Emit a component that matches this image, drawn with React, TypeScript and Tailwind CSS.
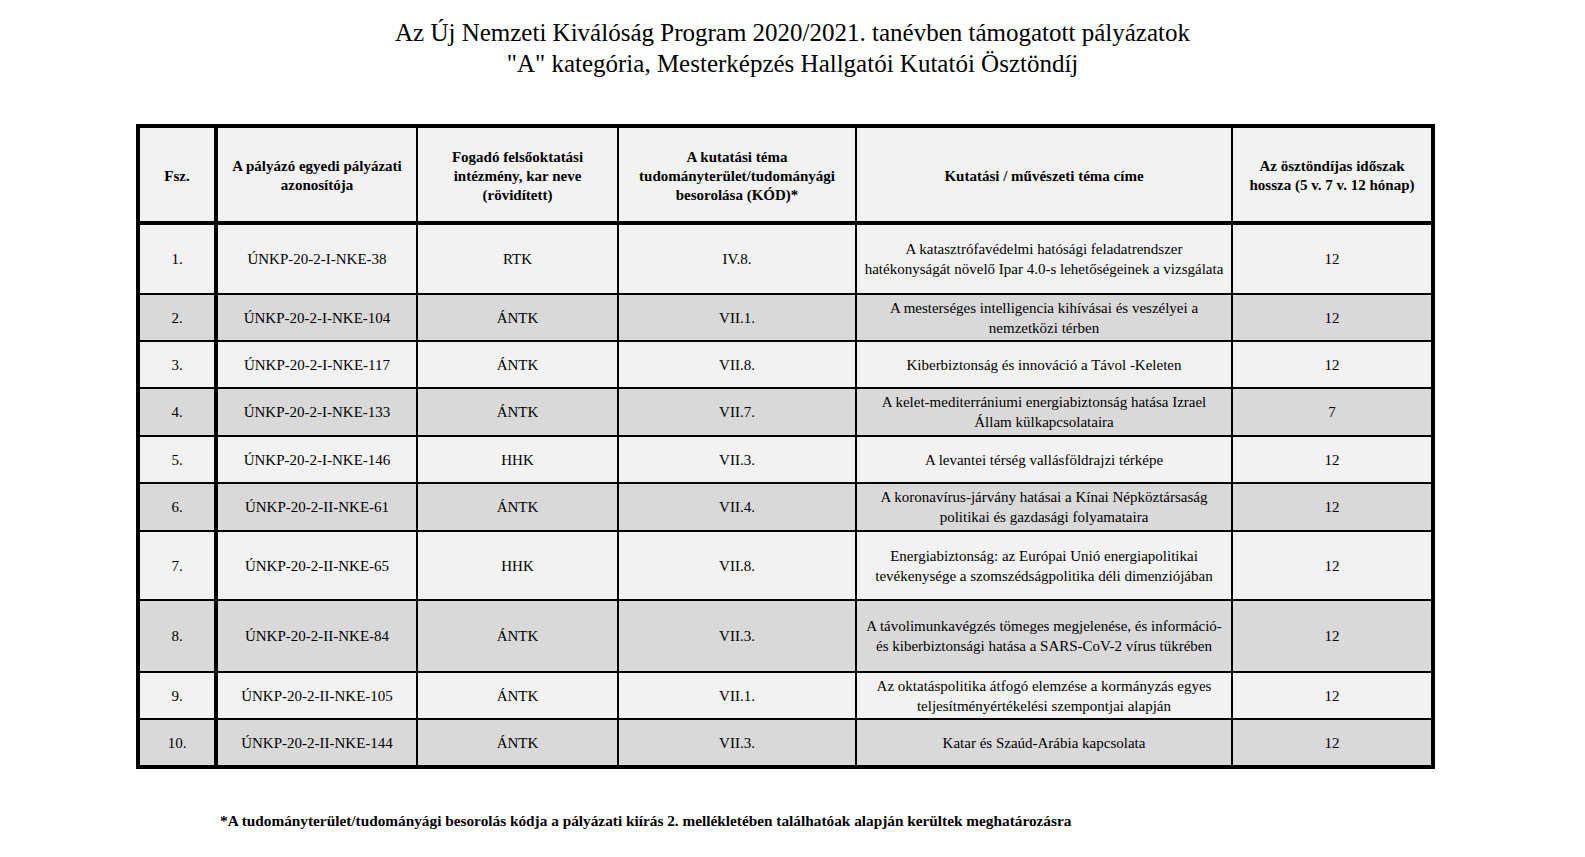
import React from 'react';

interface Row {
    no: string;
    id: string;
    inst: string;
    code: string;
    title: string[];
    months: string;
    h: string;
}

const rows: Row[] = [
    { no: '1.', id: 'ÚNKP-20-2-I-NKE-38', inst: 'RTK', code: 'IV.8.', title: ['A katasztrófavédelmi hatósági feladatrendszer', 'hatékonyságát növelő Ipar 4.0-s lehetőségeinek a vizsgálata'], months: '12', h: 'h-[68px]' },
    { no: '2.', id: 'ÚNKP-20-2-I-NKE-104', inst: 'ÁNTK', code: 'VII.1.', title: ['A mesterséges intelligencia kihívásai és veszélyei a', 'nemzetközi térben'], months: '12', h: 'h-[45px]' },
    { no: '3.', id: 'ÚNKP-20-2-I-NKE-117', inst: 'ÁNTK', code: 'VII.8.', title: ['Kiberbiztonság és innováció a Távol -Keleten'], months: '12', h: 'h-[45px]' },
    { no: '4.', id: 'ÚNKP-20-2-I-NKE-133', inst: 'ÁNTK', code: 'VII.7.', title: ['A kelet-mediterrániumi energiabiztonság hatása Izrael', 'Állam külkapcsolataira'], months: '7', h: 'h-[46px]' },
    { no: '5.', id: 'ÚNKP-20-2-I-NKE-146', inst: 'HHK', code: 'VII.3.', title: ['A levantei térség vallásföldrajzi térképe'], months: '12', h: 'h-[45px]' },
    { no: '6.', id: 'ÚNKP-20-2-II-NKE-61', inst: 'ÁNTK', code: 'VII.4.', title: ['A koronavírus-járvány hatásai a Kínai Népköztársaság', 'politikai és gazdasági folyamataira'], months: '12', h: 'h-[46px]' },
    { no: '7.', id: 'ÚNKP-20-2-II-NKE-65', inst: 'HHK', code: 'VII.8.', title: ['Energiabiztonság: az Európai Unió energiapolitikai', 'tevékenysége a szomszédságpolitika déli dimenziójában'], months: '12', h: 'h-[67px]' },
    { no: '8.', id: 'ÚNKP-20-2-II-NKE-84', inst: 'ÁNTK', code: 'VII.3.', title: ['A távolimunkavégzés tömeges megjelenése, és információ-', 'és kiberbiztonsági hatása a SARS-CoV-2 vírus tükrében'], months: '12', h: 'h-[70px]' },
    { no: '9.', id: 'ÚNKP-20-2-II-NKE-105', inst: 'ÁNTK', code: 'VII.1.', title: ['Az oktatáspolitika átfogó elemzése a kormányzás egyes', 'teljesítményértékelési szempontjai alapján'], months: '12', h: 'h-[45px]' },
    { no: '10.', id: 'ÚNKP-20-2-II-NKE-144', inst: 'ÁNTK', code: 'VII.3.', title: ['Katar és Szaúd-Arábia kapcsolata'], months: '12', h: 'h-[45px]' },
];

const grid = 'grid grid-cols-[74px_202px_201px_238px_376px_200px]';
const cell = 'flex items-center justify-center text-center border-black';
const head = `${cell} pt-[3px]`;

export default function App() {
    return (
        <div className="w-[1585px] min-h-[857px] bg-white text-black font-['Liberation_Serif',serif]">
            {/* Title */}
            <div className="pt-[17px] text-center text-[25px] leading-[31px]">
                <div>Az Új Nemzeti Kiválóság Program 2020/2021. tanévben támogatott pályázatok</div>
                <div>"A" kategória, Mesterképzés Hallgatói Kutatói Ösztöndíj</div>
            </div>

            {/* Table */}
            <div className="ml-[136px] mt-[45px] w-[1299px] border-4 border-black text-[15px] leading-[20px]">
                <div className={`${grid} h-[93px] bg-[#f2f2f2] font-bold leading-[19px]`}>
                    <div className={head}>Fsz.</div>
                    <div className={`${head} border-l-4`}>A pályázó egyedi pályázati<br />azonosítója</div>
                    <div className={`${head} border-l-2`}>Fogadó felsőoktatási<br />intézmény, kar neve<br />(rövidített)</div>
                    <div className={`${head} border-l-2`}>A kutatási téma<br />tudományterület/tudományági<br />besorolása (KÓD)*</div>
                    <div className={`${head} border-l-2`}>Kutatási / művészeti téma címe</div>
                    <div className={`${head} border-l-2`}>Az ösztöndíjas időszak<br />hossza (5 v. 7 v. 12 hónap)</div>
                </div>
                {rows.map((r, i) => (
                    <div
                        key={r.no}
                        className={`${grid} box-content ${r.h} border-black ${i === 0 ? 'border-t-4' : 'border-t-2'} ${i % 2 === 1 ? 'bg-[#d9d9d9]' : 'bg-[#f2f2f2]'}`}
                    >
                        <div className={cell}>{r.no}</div>
                        <div className={`${cell} border-l-4`}>{r.id}</div>
                        <div className={`${cell} border-l-2`}>{r.inst}</div>
                        <div className={`${cell} border-l-2`}>{r.code}</div>
                        <div className={`${cell} border-l-2 flex-col`}>
                            {r.title.map((t) => (
                                <span key={t} className="whitespace-nowrap">{t}</span>
                            ))}
                        </div>
                        <div className={`${cell} border-l-2`}>{r.months}</div>
                    </div>
                ))}
            </div>

            {/* Footnote */}
            <div className="pl-[220px] mt-[42px] text-[15.3px] leading-[20px] font-bold">
                *A tudományterület/tudományági besorolás kódja a pályázati kiírás 2. mellékletében találhatóak alapján kerültek meghatározásra
            </div>
        </div>
    );
}
